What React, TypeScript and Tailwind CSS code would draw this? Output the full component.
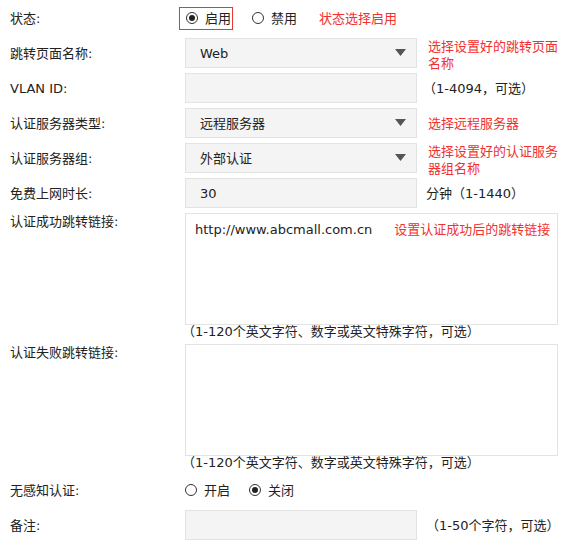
import type { ReactNode } from "react";

const FONT = "font-['DejaVu_Sans','Noto_Sans_CJK_SC',sans-serif]";

function Radio({ checked }: { checked?: boolean }) {
  return (
    <span className="relative inline-flex h-[12px] w-[12px] items-center justify-center rounded-full border border-[#333] bg-white">
      {checked && <span className="h-[6px] w-[6px] rounded-full bg-[#222]" />}
    </span>
  );
}

function Arrow() {
  return (
    <svg width="11" height="8" viewBox="0 0 11 8" className="shrink-0">
      <path d="M0 0 H11 L5.5 7 Z" fill="#555" />
    </svg>
  );
}

function Row({ label, children, note, top = false, h = "h-[30px]" }: { label: string; children: ReactNode; note?: ReactNode; top?: boolean; h?: string }) {
  return (
    <div className={`flex ${top ? "items-start" : "items-center"} ${h}`}>
      <div className="w-[175px] shrink-0">{label}</div>
      {children}
      {note}
    </div>
  );
}

function Box({ children, select }: { children?: ReactNode; select?: boolean }) {
  return (
    <div className="flex h-[30px] w-[232px] shrink-0 items-center justify-between border border-[#e3e3e3] bg-[#f4f4f4] pl-[14px] pr-[10px]">
      <span>{children}</span>
      {select && <Arrow />}
    </div>
  );
}

const Red = ({ children, cls = "" }: { children: ReactNode; cls?: string }) => (
  <div className={`shrink-0 text-[#f23030] ${cls}`}>{children}</div>
);

export default function App() {
  return (
    <div className={`${FONT} flex w-[565px] flex-col gap-[5px] bg-white px-[10px] pt-[3px] text-[13px] leading-[17px] text-[#222]`}>
      <Row label="状态:">
        <div className="ml-[-6px] flex h-[23px] w-[54px] items-center gap-[7px] border border-[#e33] pl-[6px]">
          <Radio checked />
          <span>启用</span>
        </div>
        <div className="ml-[19px] flex items-center gap-[7px]">
          <Radio />
          <span>禁用</span>
        </div>
        <Red cls="ml-[22px]">状态选择启用</Red>
      </Row>

      <Row label="跳转页面名称:" note={<Red cls="ml-[11px] w-[134px] self-start">选择设置好的跳转页面名称</Red>}>
        <Box select>Web</Box>
      </Row>

      <Row label="VLAN ID:" note={<div className="ml-[6px]">（1-4094，可选）</div>}>
        <Box />
      </Row>

      <Row label="认证服务器类型:" note={<Red cls="ml-[11px]">选择远程服务器</Red>}>
        <Box select>远程服务器</Box>
      </Row>

      <Row label="认证服务器组:" note={<Red cls="ml-[11px] w-[134px] self-start">选择设置好的认证服务器组名称</Red>}>
        <Box select>外部认证</Box>
      </Row>

      <Row label="免费上网时长:" note={<div className="ml-[9px]">分钟（1-1440）</div>}>
        <Box>30</Box>
      </Row>

      <div>
        <Row label="认证成功跳转链接:" top h="h-[112px]">
          <div className="flex h-[112px] w-[373px] shrink-0 items-start border border-[#e3e3e3] bg-white pl-[9px] pt-[7px]">
            <span className="whitespace-nowrap">http://www.abcmall.com.cn</span>
            <Red cls="ml-[22px] whitespace-nowrap">设置认证成功后的跳转链接</Red>
          </div>
        </Row>
        <div className="ml-[172px] h-[14px] leading-[14px]">（1-120个英文字符、数字或英文特殊字符，可选）</div>
      </div>

      <div>
        <Row label="认证失败跳转链接:" top h="h-[112px]">
          <div className="h-[112px] w-[373px] shrink-0 border border-[#e3e3e3] bg-white" />
        </Row>
        <div className="ml-[172px] h-[14px] leading-[14px]">（1-120个英文字符、数字或英文特殊字符，可选）</div>
      </div>

      <Row label="无感知认证:">
        <div className="flex items-center gap-[7px]">
          <Radio />
          <span>开启</span>
        </div>
        <div className="ml-[19px] flex items-center gap-[7px]">
          <Radio checked />
          <span>关闭</span>
        </div>
      </Row>

      <Row label="备注:" note={<div className="ml-[9px]">（1-50个字符，可选）</div>}>
        <Box />
      </Row>
    </div>
  );
}
